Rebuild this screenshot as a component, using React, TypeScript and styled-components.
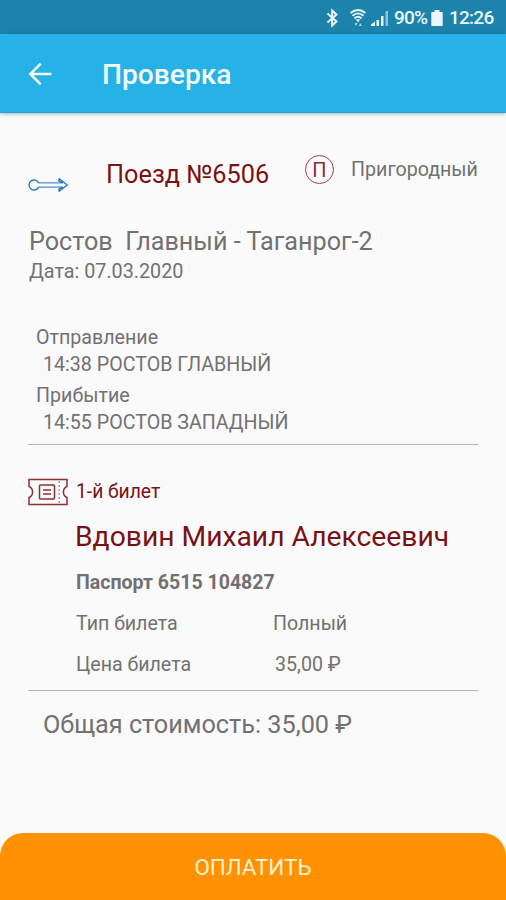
import React from "react";
import styled, { createGlobalStyle } from "styled-components";

const GlobalStyle = createGlobalStyle`
  * { box-sizing: border-box; }
  body { margin: 0; font-family: Roboto, sans-serif; background: #fafafa; }
`;

const GREY = "#717171";
const MAROON = "#7b1113";

const Screen = styled.div`
  display: flex;
  flex-direction: column;
  height: 900px;
  overflow: hidden;
  background: #fafafa;
  color: ${GREY};
`;

const StatusBar = styled.div`
  flex: none;
  display: flex;
  align-items: center;
  justify-content: flex-end;
  height: 34px;
  padding: 2px 10px 0 0;
  background: #1d83aa;
  color: #e9f7fc;

  svg { flex: none; display: block; }
`;

const StatusText = styled.span<{ $width: number }>`
  width: ${(p) => p.$width}px;
  font-size: 19px;
  line-height: 24px;
  font-weight: 500;
  letter-spacing: -0.75px;
  white-space: nowrap;
`;

const AppBar = styled.header`
  flex: none;
  display: flex;
  align-items: center;
  height: 79px;
  padding: 2px 0 0 28px;
  background: #26b1e7;
  border-bottom: 1px solid #1fa3d8;
  box-shadow: 0 1px 4px rgba(0, 0, 0, 0.28);
  color: #f4fcff;
`;

const BackButton = styled.button`
  display: flex;
  padding: 0;
  border: 0;
  background: none;
  color: inherit;
`;

const Title = styled.h1`
  margin: 0 0 0 50px;
  font-size: 28.2px;
  line-height: 34px;
  font-weight: 500;
  padding-top: 1px;
`;

const Content = styled.main`
  flex: 1;
  padding: 42px 28px 0;
`;

const TrainHeader = styled.div`
  display: flex;
  align-items: flex-start;
  height: 40px;
`;

const RouteIconBox = styled.div`
  margin-top: 22px;
  width: 78px;
  svg { display: block; }
`;

const TrainNumber = styled.div`
  width: 199px;
  margin-top: 4px;
  font-size: 25.3px;
  line-height: 32px;
  color: ${MAROON};
`;

const CategoryBadge = styled.div`
  width: 29px;
  height: 29px;
  border: 1.5px solid #963f4b;
  border-radius: 50%;
  color: #8d2c39;
  font-size: 20px;
  line-height: 28px;
  text-align: center;
`;

const Category = styled.div`
  margin: 3px 0 0 17px;
  font-size: 19.65px;
  line-height: 24px;
`;

const Route = styled.div`
  margin: 31px 0 0 1px;
  font-size: 25.2px;
  line-height: 32px;
  white-space: pre;
`;

const TripDate = styled.div`
  margin: 2px 0 0 1px;
  font-size: 19.75px;
  line-height: 24px;
`;

const Stops = styled.dl`
  margin: 40px 0 0;
  padding: 0 0 8px 8px;
  border-bottom: 1px solid #b5b5b5;
  font-size: 19.65px;
  line-height: 27px;
`;

const StopLabel = styled.dt`
  dd + & { margin-top: 4px; }
`;

const StopValue = styled.dd`
  margin: 0 0 0 7px;
`;

const Ticket = styled.section`
  padding: 33px 0 13px;
  border-bottom: 1px solid #b5b5b5;
`;

const TicketHeading = styled.div`
  display: flex;
  align-items: flex-start;
  height: 28px;
  color: ${MAROON};
  font-size: 19.3px;
  line-height: 28px;
  svg { display: block; margin-right: 8px; }
`;

const TicketBody = styled.div`
  padding-left: 48px;
`;

const Passenger = styled.div`
  margin: 14px 0 0 -1px;
  font-size: 28.25px;
  line-height: 34px;
  color: ${MAROON};
  white-space: nowrap;
`;

const Passport = styled.div`
  margin-top: 17px;
  font-size: 19.55px;
  line-height: 24px;
  font-weight: 700;
`;

const Details = styled.dl`
  display: grid;
  grid-template-columns: 197px 1fr;
  row-gap: 17px;
  margin: 17px 0 0;
  font-size: 19.6px;
  line-height: 24px;
`;

const DetailName = styled.dt``;

const DetailValue = styled.dd<{ $indent?: number }>`
  margin: 0 0 0 ${(p) => p.$indent ?? 0}px;
`;

const Total = styled.div`
  margin: 18px 0 0 15px;
  font-size: 25.25px;
  line-height: 32px;
`;

const PayButton = styled.button`
  flex: none;
  height: 67px;
  padding: 0;
  border: 0;
  border-radius: 23px 23px 0 0;
  background: #ff9102;
  color: #fff0d0;
  font: 400 22.4px/28px Roboto, sans-serif;
`;

const BluetoothIcon = () => (
  <svg width="14" height="20" viewBox="0 0 14 20" fill="none" stroke="currentColor" strokeWidth="2">
    <path d="M1.500 5.500l9 8L6.200 17.500V2.500L10.500 6.500l-9 8" />
  </svg>
);

const WifiIcon = () => (
  <svg width="18" height="20" viewBox="0 0 18 20" fill="none" stroke="currentColor">
    <path d="M1.500 5Q9-1 16.500 5M3.500 7.800Q9 3 14.500 7.800M5.500 10.500Q9 7 12.500 10.500" strokeWidth="1.800" />
    <path d="M6.800 11.300h4.400L9 14.500z" fill="currentColor" stroke="none" />
    <path d="M5.500 15l1.500 3 1.500-3zM9.800 18l1.500-3 1.500 3z" fill="currentColor" stroke="none" opacity=".7" />
  </svg>
);

const SignalIcon = () => (
  <svg width="18" height="20" viewBox="0 0 18 20" fill="currentColor">
    <path d="M0 18v-1.500l4-3V18zM5.500 18v-6h2.500v6zM10 18V8h2.500v10z" />
    <path d="M14.500 18V3H17v15z" opacity=".55" />
  </svg>
);

const BatteryIcon = () => (
  <svg width="12" height="20" viewBox="0 0 12 20" fill="currentColor">
    <path d="M3.500 2h5v2H11a.7.7 0 0 1 .7.7v12.600a.7.7 0 0 1-.7.7H1a.7.7 0 0 1-.7-.7V4.700A.7.7 0 0 1 1 4h2.500z" />
  </svg>
);

const BackIcon = () => (
  <svg width="24" height="24" viewBox="0 0 24 24" fill="none" stroke="currentColor" strokeWidth="2.500">
    <path d="M23.300 12H3M12.700 1.600L2.300 12l10.400 10.400" />
  </svg>
);

const RouteArrowIcon = () => (
  <svg width="40" height="16" viewBox="0 0 40 16" fill="none" stroke="#2477c4" strokeWidth="1.400">
    <path d="M10.600 5.900A5 5 0 1 0 10.600 10.100" />
    <path d="M10.300 5.900H34.500M10.300 10.100H34.500" opacity=".8" />
    <path d="M31 1.500V4L34.800 5.900M31 14.500V12l3.800-1.900M31 1.500l8.300 6.500L31 14.500" />
  </svg>
);

const TicketIcon = () => (
  <svg width="40" height="28" viewBox="0 0 40 28" fill="none" stroke="#8a3038" strokeWidth="1.500">
    <path d="M1 1.500H39V8.500A6 6 0 0 0 39 19.500V26.500H1V19.500A6 6 0 0 0 1 8.500Z" />
    <rect x="11.500" y="7" width="15" height="14" rx="1" />
    <path d="M15 12h8M15 16h8" />
    <path d="M31.200 3v22" strokeDasharray="2 2" strokeWidth="1.200" opacity=".6" />
  </svg>
);

const StatusIcons = styled.div`
  display: flex;
  align-items: center;
  margin-right: 5px;
  svg:nth-child(2) { margin: 0 4px 0 9px; }
`;

const BatterySlot = styled.div`
  margin-right: 6px;
`;

export default function App() {
  return (
    <>
      <GlobalStyle />
      <Screen>
        <StatusBar>
          <StatusIcons>
            <BluetoothIcon />
            <WifiIcon />
            <SignalIcon />
          </StatusIcons>
          <StatusText $width={37}>90%</StatusText>
          <BatterySlot><BatteryIcon /></BatterySlot>
          <StatusText $width={47}>12:26</StatusText>
        </StatusBar>
        <AppBar>
          <BackButton aria-label="Назад"><BackIcon /></BackButton>
          <Title>Проверка</Title>
        </AppBar>
        <Content>
          <TrainHeader>
            <RouteIconBox><RouteArrowIcon /></RouteIconBox>
            <TrainNumber>Поезд №6506</TrainNumber>
            <CategoryBadge>П</CategoryBadge>
            <Category>Пригородный</Category>
          </TrainHeader>
          <Route>{"Ростов  Главный - Таганрог-2"}</Route>
          <TripDate>Дата: 07.03.2020</TripDate>
          <Stops>
            <StopLabel>Отправление</StopLabel>
            <StopValue>14:38 РОСТОВ ГЛАВНЫЙ</StopValue>
            <StopLabel>Прибытие</StopLabel>
            <StopValue>14:55 РОСТОВ ЗАПАДНЫЙ</StopValue>
          </Stops>
          <Ticket>
            <TicketHeading><TicketIcon />1-й билет</TicketHeading>
            <TicketBody>
              <Passenger>Вдовин Михаил Алексеевич</Passenger>
              <Passport>Паспорт 6515 104827</Passport>
              <Details>
                <DetailName>Тип билета</DetailName>
                <DetailValue>Полный</DetailValue>
                <DetailName>Цена билета</DetailName>
                <DetailValue $indent={2}>35,00 ₽</DetailValue>
              </Details>
            </TicketBody>
          </Ticket>
          <Total>Общая стоимость: 35,00 ₽</Total>
        </Content>
        <PayButton>ОПЛАТИТЬ</PayButton>
      </Screen>
    </>
  );
}
